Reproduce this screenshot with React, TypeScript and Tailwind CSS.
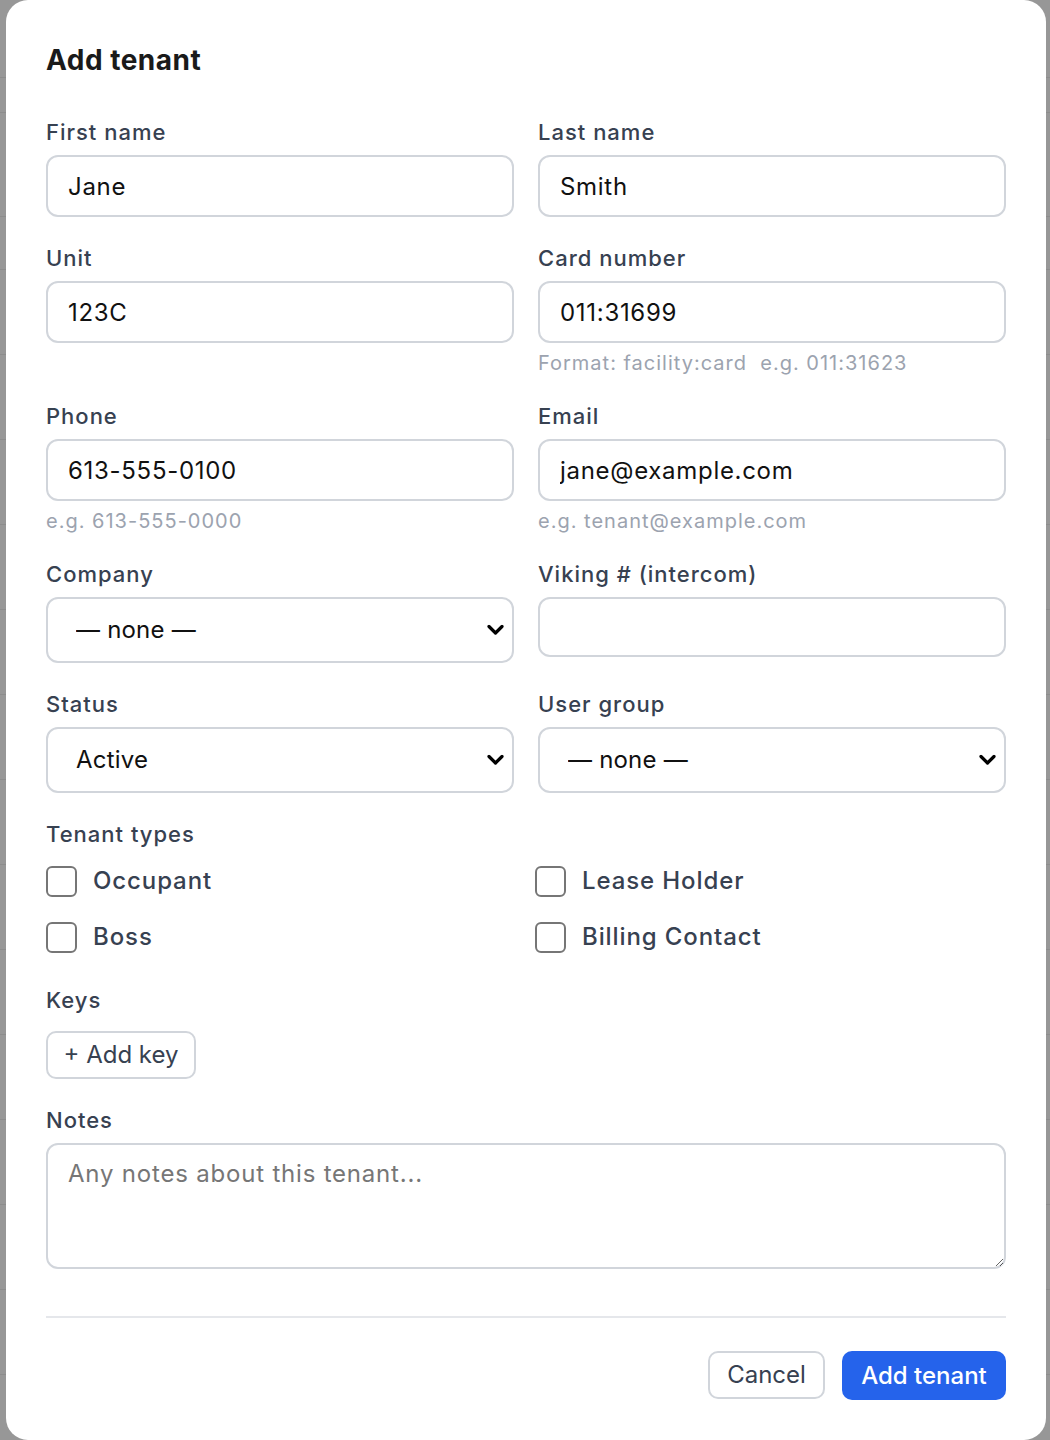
import { useState } from "react";

const rowHeights = [78, 35, 104, 53, 85, 85, 85, 85, 85, 85, 85, 85, 85, 85, 85, 85, 85];

function Label({ children }: { children: React.ReactNode }) {
    return <label className="block text-[22px] leading-[32px] font-medium tracking-[1px] text-[#374151]">{children}</label>;
}

function Field({ label, value, hint, height = "h-[62px]" }: { label: string; value: string; hint?: string; height?: string }) {
    const [v, setV] = useState(value);
    return (
        <div>
            <Label>{label}</Label>
            <input
                type="text"
                value={v}
                onChange={e => setV(e.target.value)}
                className={`mt-[7px] w-full ${height} rounded-xl border-2 border-[#d1d5db] bg-white px-5 text-[24px] tracking-[0.7px] text-[#111111] outline-none`}
            />
            {hint && <div className="mt-2 text-[20px] leading-6 tracking-[1px] text-[#9ca3af] whitespace-pre">{hint}</div>}
        </div>
    );
}

function SelectField({ label, value, options }: { label: string; value: string; options: string[] }) {
    const [v, setV] = useState(value);
    return (
        <div>
            <Label>{label}</Label>
            <div className="relative mt-[7px]">
                <select
                    value={v}
                    onChange={e => setV(e.target.value)}
                    className="w-full h-[66px] appearance-none rounded-xl border-2 border-[#d1d5db] bg-white pl-[28px] pr-12 text-[24px] tracking-[0.2px] text-[#111111] outline-none"
                >
                    {options.map(o => <option key={o}>{o}</option>)}
                </select>
                <svg className="pointer-events-none absolute right-[10px] top-1/2 -translate-y-1/2" width="17" height="11" viewBox="0 0 17 11" fill="none">
                    <path d="M2 2l6.5 6.5L15 2" stroke="#000" strokeWidth="3.2" strokeLinecap="round" strokeLinejoin="round" />
                </svg>
            </div>
        </div>
    );
}

function Check({ label }: { label: string }) {
    return (
        <label className="flex h-10 items-center gap-4">
            <input type="checkbox" className="h-[31px] w-[31px] appearance-none rounded-md border-2 border-[#767676] bg-white checked:bg-[#2563eb]" />
            <span className="text-[24px] font-medium tracking-[0.9px] text-[#374151]">{label}</span>
        </label>
    );
}

export default function App() {
    return (
        <div className="relative h-[1440px] overflow-hidden bg-[#979797] font-[Inter,sans-serif]">
            {/* Page behind the modal */}
            <div className="flex flex-col">
                {rowHeights.map((h, i) => (
                    <div key={i} style={{ height: h }} className="border-b border-[#8c8c8c]" />
                ))}
            </div>

            {/* Modal */}
            <div className="absolute left-[6px] top-0 h-[1440px] w-[1040px] rounded-[22px] bg-white px-10 pt-[42px]">
                <h2 className="text-[28px] leading-9 font-bold tracking-[0.5px] text-[#1a1a1a]">Add tenant</h2>

                <div className="mt-[38px] grid grid-cols-2 gap-x-6 gap-y-[25px]">
                    <Field label="First name" value="Jane" />
                    <Field label="Last name" value="Smith" />
                    <Field label="Unit" value="123C" />
                    <Field label="Card number" value="011:31699" hint="Format: facility:card  e.g. 011:31623" />
                    <Field label="Phone" value="613-555-0100" hint="e.g. 613-555-0000" />
                    <Field label="Email" value="jane@example.com" hint="e.g. tenant@example.com" />
                    <SelectField label="Company" value="— none —" options={["— none —"]} />
                    <Field label="Viking # (intercom)" value="" height="h-[60px]" />
                    <SelectField label="Status" value="Active" options={["Active", "Inactive"]} />
                    <SelectField label="User group" value="— none —" options={["— none —"]} />
                </div>

                <div className="mt-[25px]">
                    <Label>Tenant types</Label>
                    <div className="mt-[11px] grid grid-cols-2 gap-x-[18px] gap-y-4">
                        <Check label="Occupant" />
                        <Check label="Lease Holder" />
                        <Check label="Boss" />
                        <Check label="Billing Contact" />
                    </div>
                </div>

                <div className="mt-[27px]">
                    <Label>Keys</Label>
                    <button className="mt-[15px] h-12 w-[150px] rounded-[10px] border-2 border-[#d1d5db] bg-white text-[24px] text-[#374151]">
                        + Add key
                    </button>
                </div>

                <div className="mt-[25px]">
                    <Label>Notes</Label>
                    <textarea
                        placeholder="Any notes about this tenant..."
                        className="mt-[7px] block h-[126px] w-full rounded-xl border-2 border-[#d1d5db] px-5 pt-[13px] text-[24px] leading-8 tracking-[0.8px] text-[#111111] outline-none placeholder:text-[#767676]"
                    />
                </div>

                <div className="mt-[47px] border-t-2 border-[#e5e7eb] pt-[33px]">
                    <div className="flex justify-end gap-[17px]">
                        <button className="h-12 w-[117px] rounded-[10px] border-2 border-[#d1d5db] bg-white text-[24px] text-[#374151]">
                            Cancel
                        </button>
                        <button className="h-[49px] w-[164px] rounded-[10px] bg-[#2563eb] text-[24px] font-medium text-white">
                            Add tenant
                        </button>
                    </div>
                </div>
            </div>
        </div>
    );
}
